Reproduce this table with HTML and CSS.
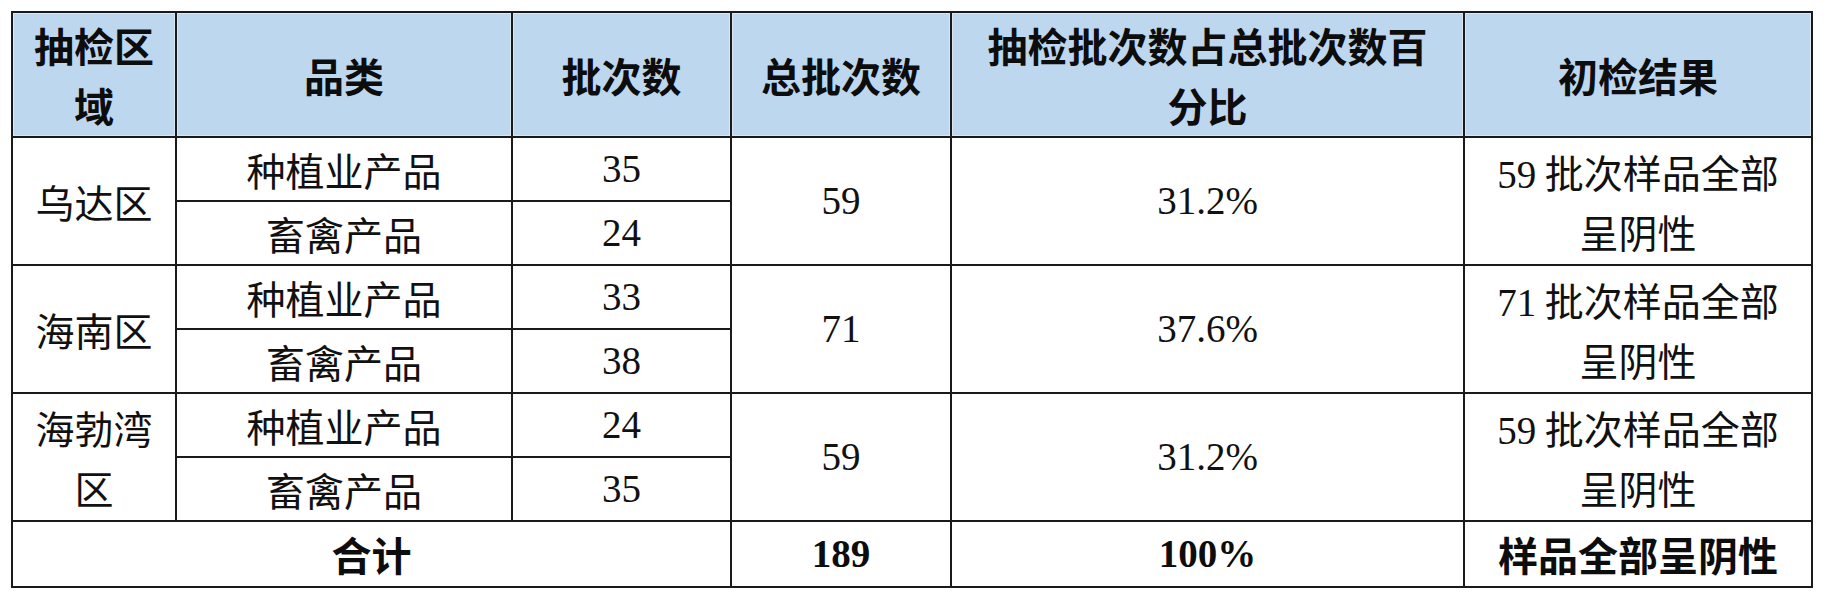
FILE: index.html
```html
<!DOCTYPE html>
<html lang="zh-CN">
<head>
<meta charset="utf-8">
<title>抽检结果</title>
<link rel="stylesheet" href="styles.css">
</head>
<body>
<div class="page">
<table class="report">
  <colgroup>
    <col class="c-area">
    <col class="c-cat">
    <col class="c-num">
    <col class="c-total">
    <col class="c-pct">
    <col class="c-result">
  </colgroup>
  <thead>
    <tr class="row-head">
      <th>抽检区<br>域</th>
      <th>品类</th>
      <th>批次数</th>
      <th>总批次数</th>
      <th>抽检批次数占总批次数百<br>分比</th>
      <th>初检结果</th>
    </tr>
  </thead>
  <tbody>
    <tr class="row-sub">
      <td rowspan="2">乌达区</td>
      <td>种植业产品</td>
      <td class="num">35</td>
      <td rowspan="2" class="num">59</td>
      <td rowspan="2" class="num">31.2%</td>
      <td rowspan="2" class="result"><span class="num">59</span> 批次样品全部<br>呈阴性</td>
    </tr>
    <tr class="row-sub">
      <td>畜禽产品</td>
      <td class="num">24</td>
    </tr>
    <tr class="row-sub">
      <td rowspan="2">海南区</td>
      <td>种植业产品</td>
      <td class="num">33</td>
      <td rowspan="2" class="num">71</td>
      <td rowspan="2" class="num">37.6%</td>
      <td rowspan="2" class="result"><span class="num">71</span> 批次样品全部<br>呈阴性</td>
    </tr>
    <tr class="row-sub">
      <td>畜禽产品</td>
      <td class="num">38</td>
    </tr>
    <tr class="row-sub">
      <td rowspan="2">海勃湾<br>区</td>
      <td>种植业产品</td>
      <td class="num">24</td>
      <td rowspan="2" class="num">59</td>
      <td rowspan="2" class="num">31.2%</td>
      <td rowspan="2" class="result"><span class="num">59</span> 批次样品全部<br>呈阴性</td>
    </tr>
    <tr class="row-sub">
      <td>畜禽产品</td>
      <td class="num">35</td>
    </tr>
    <tr class="row-total">
      <td colspan="3">合计</td>
      <td class="num">189</td>
      <td class="num">100%</td>
      <td>样品全部呈阴性</td>
    </tr>
  </tbody>
</table>
</div>
</body>
</html>
```

FILE: styles.css
```css
html, body {
  margin: 0;
  padding: 0;
  background: #ffffff;
}

.page {
  padding: 11px 0 0 11px;
}

.report {
  border-collapse: collapse;
  table-layout: fixed;
  width: 1800px;
  color: #111111;
  font-family: "Noto Sans CJK SC", sans-serif;
  font-size: 39px;
}

.c-area { width: 164px; }
.c-cat { width: 336px; }
.c-num { width: 219px; }
.c-total { width: 220px; }
.c-pct { width: 513px; }
.c-result { width: 348px; }

.report th,
.report td {
  border: 2px solid #1a1a1a;
  padding: 0 4px;
  text-align: center;
  vertical-align: middle;
  white-space: nowrap;
}

.report th {
  background: #bdd7ee;
  box-shadow: inset 0 0 0 1px #d9e7f5;
  font-weight: 700;
  font-size: 40px;
  line-height: 60px;
  color: #0d0d0d;
}

.row-head { height: 125px; }
.row-sub { height: 64px; }
.row-total { height: 66px; }

.report td {
  line-height: 60px;
  font-weight: 400;
}

.report td.num,
.num {
  font-family: "Liberation Serif", "Noto Sans CJK SC", serif;
}

.result .num {
  line-height: 1;
}

.row-total td {
  font-weight: 700;
  font-size: 40px;
  color: #0d0d0d;
}

.row-total td.num {
  font-size: 39px;
}
```
